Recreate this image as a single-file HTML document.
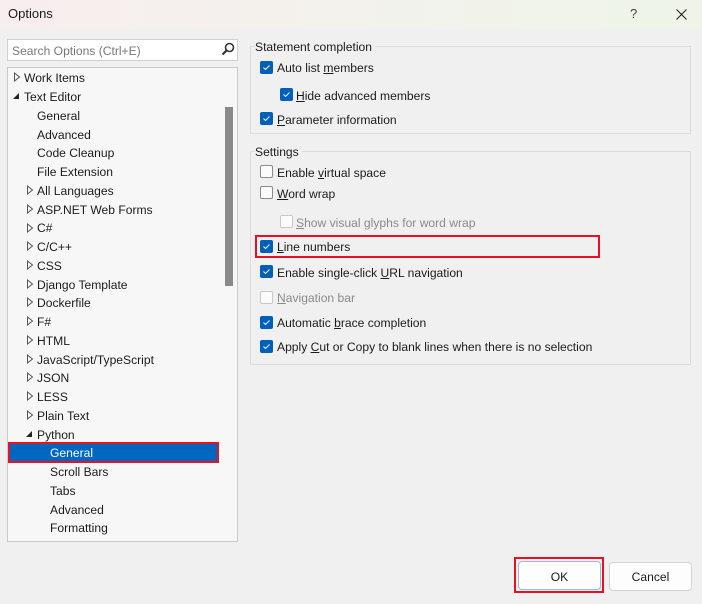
<!DOCTYPE html>
<html><head><style>
*{box-sizing:border-box;margin:0;padding:0}
body{width:702px;height:604px;background:#f0f0f0;font-family:"Liberation Sans",sans-serif;font-size:12.1px;color:#1b1b1b;position:relative;overflow:hidden}
.a{position:absolute;white-space:nowrap}
.t{position:absolute;white-space:nowrap;line-height:16px;margin-top:1px}
.cb{position:absolute;width:13px;height:13px;border-radius:2px;background:#005fb8;}
.cb svg{position:absolute;left:1px;top:1px}
.ub{position:absolute;width:13px;height:13px;border-radius:2px;border:1px solid #8a8a8a;background:#fbfbfb}
.ub.d{border-color:#c8c8c8}
</style></head><body>
<div class="a" style="left:0;top:0;width:702px;height:29px;background:linear-gradient(90deg,#f7eeee,#f3f2ed 50%,#eef5e8)"></div>
<div class="t" style="left:8px;top:5px;font-size:13px">Options</div>
<div class="t" style="left:630px;top:5px;font-size:13px;color:#444">?</div>
<svg class="a" style="left:676px;top:9px" width="11" height="11"><path d="M0.5 0.5L10.5 10.5M10.5 0.5L0.5 10.5" stroke="#222" stroke-width="1.1"/></svg>

<div class="a" style="left:7px;top:39px;width:231px;height:22px;background:#fff;border:1px solid #d0d0d0"></div>
<div class="t" style="left:12px;top:42px;color:#777">Search Options (Ctrl+E)</div>
<svg class="a" style="left:221px;top:42px" width="14" height="14"><circle cx="8.5" cy="5.5" r="4" stroke="#333" stroke-width="1.6" fill="none"/><path d="M5.5 8.5L1.5 12.5" stroke="#333" stroke-width="2.2"/></svg>

<div class="a" style="left:7px;top:67px;width:231px;height:475px;background:#f7f7f7;border:1px solid #c8c8c8"></div>
<div class="a" style="left:225px;top:107px;width:8px;height:179px;background:#8a8a8a"></div>

<svg class="a" style="left:13px;top:72px" width="8" height="10"><path d="M1.5 1L6.5 5L1.5 9Z" fill="none" stroke="#555"/></svg>
<div class="t" style="left:24px;top:69px">Work Items</div>
<svg class="a" style="left:12px;top:92px" width="8" height="8"><path d="M7 1L7 7L1 7Z" fill="#222"/></svg>
<div class="t" style="left:24px;top:88px">Text Editor</div>
<div class="t" style="left:37px;top:107px">General</div>
<div class="t" style="left:37px;top:126px">Advanced</div>
<div class="t" style="left:37px;top:144px">Code Cleanup</div>
<div class="t" style="left:37px;top:163px">File Extension</div>

<svg class="a" style="left:26px;top:185px" width="8" height="10"><path d="M1.5 1L6.5 5L1.5 9Z" fill="none" stroke="#555"/></svg>
<div class="t" style="left:37px;top:182px">All Languages</div>
<svg class="a" style="left:26px;top:204px" width="8" height="10"><path d="M1.5 1L6.5 5L1.5 9Z" fill="none" stroke="#555"/></svg>
<div class="t" style="left:37px;top:201px">ASP.NET Web Forms</div>
<svg class="a" style="left:26px;top:223px" width="8" height="10"><path d="M1.5 1L6.5 5L1.5 9Z" fill="none" stroke="#555"/></svg>
<div class="t" style="left:37px;top:219px">C#</div>
<svg class="a" style="left:26px;top:241px" width="8" height="10"><path d="M1.5 1L6.5 5L1.5 9Z" fill="none" stroke="#555"/></svg>
<div class="t" style="left:37px;top:238px">C/C++</div>
<svg class="a" style="left:26px;top:260px" width="8" height="10"><path d="M1.5 1L6.5 5L1.5 9Z" fill="none" stroke="#555"/></svg>
<div class="t" style="left:37px;top:257px">CSS</div>
<svg class="a" style="left:26px;top:279px" width="8" height="10"><path d="M1.5 1L6.5 5L1.5 9Z" fill="none" stroke="#555"/></svg>
<div class="t" style="left:37px;top:276px">Django Template</div>
<svg class="a" style="left:26px;top:297px" width="8" height="10"><path d="M1.5 1L6.5 5L1.5 9Z" fill="none" stroke="#555"/></svg>
<div class="t" style="left:37px;top:294px">Dockerfile</div>
<svg class="a" style="left:26px;top:316px" width="8" height="10"><path d="M1.5 1L6.5 5L1.5 9Z" fill="none" stroke="#555"/></svg>
<div class="t" style="left:37px;top:313px">F#</div>
<svg class="a" style="left:26px;top:335px" width="8" height="10"><path d="M1.5 1L6.5 5L1.5 9Z" fill="none" stroke="#555"/></svg>
<div class="t" style="left:37px;top:332px">HTML</div>
<svg class="a" style="left:26px;top:354px" width="8" height="10"><path d="M1.5 1L6.5 5L1.5 9Z" fill="none" stroke="#555"/></svg>
<div class="t" style="left:37px;top:351px">JavaScript/TypeScript</div>
<svg class="a" style="left:26px;top:372px" width="8" height="10"><path d="M1.5 1L6.5 5L1.5 9Z" fill="none" stroke="#555"/></svg>
<div class="t" style="left:37px;top:369px">JSON</div>
<svg class="a" style="left:26px;top:391px" width="8" height="10"><path d="M1.5 1L6.5 5L1.5 9Z" fill="none" stroke="#555"/></svg>
<div class="t" style="left:37px;top:388px">LESS</div>
<svg class="a" style="left:26px;top:410px" width="8" height="10"><path d="M1.5 1L6.5 5L1.5 9Z" fill="none" stroke="#555"/></svg>
<div class="t" style="left:37px;top:407px">Plain Text</div>
<svg class="a" style="left:25px;top:430px" width="8" height="8"><path d="M7 1L7 7L1 7Z" fill="#222"/></svg>
<div class="t" style="left:37px;top:426px">Python</div>
<div class="a" style="left:8px;top:442px;width:211px;height:21px;background:#0067c0;border:2px solid #e81123"></div>
<div class="t" style="left:50px;top:444px;color:#fff">General</div>
<div class="t" style="left:50px;top:463px">Scroll Bars</div>
<div class="t" style="left:50px;top:482px">Tabs</div>
<div class="t" style="left:50px;top:501px">Advanced</div>
<div class="t" style="left:50px;top:519px">Formatting</div>

<div class="a" style="left:250px;top:46px;width:441px;height:88px;border:1px solid #dcdcdc"></div>
<div class="t" style="left:255px;top:38px;background:#f0f0f0;padding-right:3px">Statement completion</div>
<div class="a" style="left:250px;top:151px;width:441px;height:214px;border:1px solid #dcdcdc"></div>
<div class="t" style="left:255px;top:143px;background:#f0f0f0;padding-right:3px">Settings</div>

<div class="cb" style="left:260px;top:61px"><svg width="11" height="11"><path d="M2.5 5.5L4.5 7.5L8.5 3.5" stroke="#fff" fill="none" stroke-width="1"/></svg></div>
<div class="t" style="left:277px;top:59px">Auto list <u>m</u>embers</div>
<div class="cb" style="left:280px;top:88px"><svg width="11" height="11"><path d="M2.5 5.5L4.5 7.5L8.5 3.5" stroke="#fff" fill="none" stroke-width="1"/></svg></div>
<div class="t" style="left:296px;top:87px"><u>H</u>ide advanced members</div>
<div class="cb" style="left:260px;top:112px"><svg width="11" height="11"><path d="M2.5 5.5L4.5 7.5L8.5 3.5" stroke="#fff" fill="none" stroke-width="1"/></svg></div>
<div class="t" style="left:277px;top:111px"><u>P</u>arameter information</div>

<div class="ub" style="left:260px;top:165px"></div>
<div class="t" style="left:277px;top:164px">Enable <u>v</u>irtual space</div>
<div class="ub" style="left:260px;top:186px"></div>
<div class="t" style="left:277px;top:185px"><u>W</u>ord wrap</div>
<div class="ub d" style="left:280px;top:215px"></div>
<div class="t" style="left:296px;top:214px;color:#8a8a8a"><u>S</u>how visual glyphs for word wrap</div>
<div class="a" style="left:255px;top:235px;width:345px;height:23px;border:2px solid #e81123"></div>
<div class="cb" style="left:260px;top:240px"><svg width="11" height="11"><path d="M2.5 5.5L4.5 7.5L8.5 3.5" stroke="#fff" fill="none" stroke-width="1"/></svg></div>
<div class="t" style="left:277px;top:238px"><u>L</u>ine numbers</div>
<div class="cb" style="left:260px;top:265px"><svg width="11" height="11"><path d="M2.5 5.5L4.5 7.5L8.5 3.5" stroke="#fff" fill="none" stroke-width="1"/></svg></div>
<div class="t" style="left:277px;top:264px">Enable single-click <u>U</u>RL navigation</div>
<div class="ub d" style="left:260px;top:291px"></div>
<div class="t" style="left:277px;top:289px;color:#8a8a8a"><u>N</u>avigation bar</div>
<div class="cb" style="left:260px;top:316px"><svg width="11" height="11"><path d="M2.5 5.5L4.5 7.5L8.5 3.5" stroke="#fff" fill="none" stroke-width="1"/></svg></div>
<div class="t" style="left:277px;top:314px">Automatic <u>b</u>race completion</div>
<div class="cb" style="left:260px;top:340px"><svg width="11" height="11"><path d="M2.5 5.5L4.5 7.5L8.5 3.5" stroke="#fff" fill="none" stroke-width="1"/></svg></div>
<div class="t" style="left:277px;top:338px">Apply <u>C</u>ut or Copy to blank lines when there is no selection</div>

<div class="a" style="left:514px;top:557px;width:90px;height:36px;border:2px solid #e81123"></div>
<div class="a" style="left:518px;top:561px;width:83px;height:29px;background:#fdfdfd;border:1px solid #9fb9de;border-radius:4px"></div>
<div class="t" style="left:518px;top:568px;width:83px;text-align:center">OK</div>
<div class="a" style="left:609px;top:562px;width:83px;height:29px;background:#fdfdfd;border:1px solid #d4d4d4;border-radius:4px"></div>
<div class="t" style="left:609px;top:568px;width:83px;text-align:center">Cancel</div>
</body></html>
